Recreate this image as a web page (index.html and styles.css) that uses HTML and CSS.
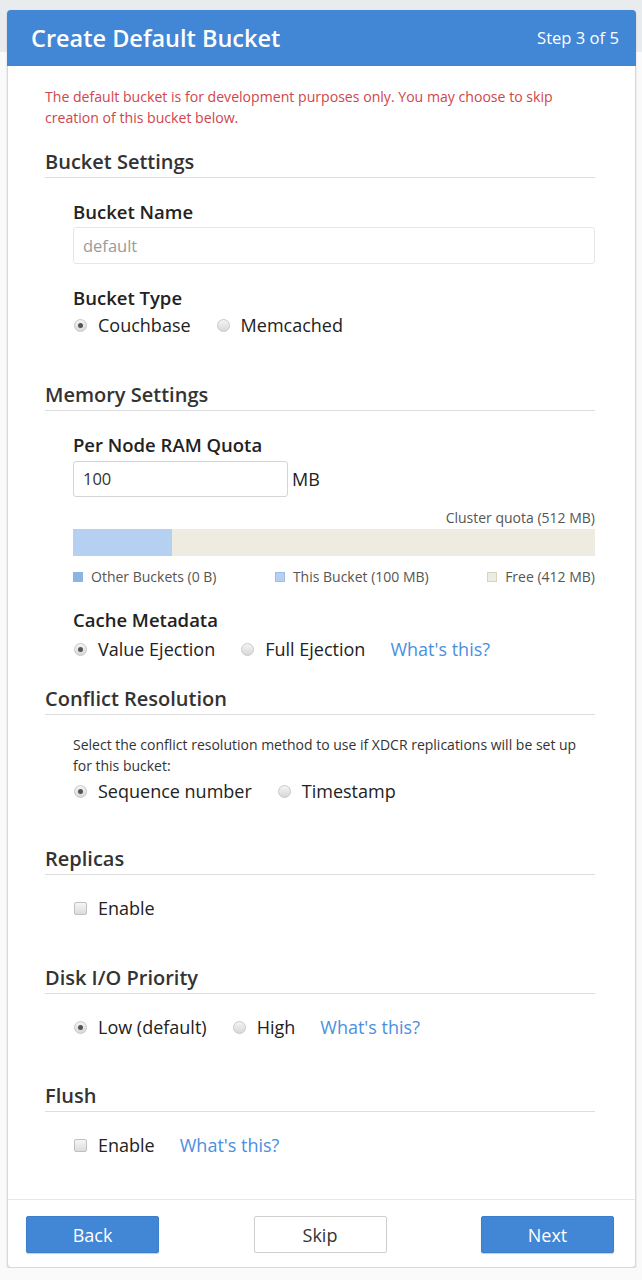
FILE: index.html
```html
<!DOCTYPE html>
<html>
<head>
<meta charset="utf-8">
<link rel="stylesheet" href="styles.css">
</head>
<body>
<div class="topband"></div>
<div class="card">
  <div class="card-header">
    <h1 class="title">Create Default Bucket</h1>
    <span class="step">Step 3 of 5</span>
  </div>
  <div class="card-body">
    <p class="warning">The default bucket is for development purposes only. You may choose to skip creation of this bucket below.</p>

    <h2 class="section-title s-first">Bucket Settings</h2>
    <div class="field">
      <label class="field-label">Bucket Name</label>
      <div class="text-input wide placeholder">default</div>
    </div>
    <div class="field">
      <label class="field-label">Bucket Type</label>
      <div class="options">
        <span class="opt"><span class="radio checked"></span>Couchbase</span>
        <span class="opt"><span class="radio"></span>Memcached</span>
      </div>
    </div>

    <h2 class="section-title s-mem">Memory Settings</h2>
    <div class="field">
      <label class="field-label l-quota">Per Node RAM Quota</label>
      <div class="quota-row">
        <div class="text-input short">100</div>
        <span class="unit">MB</span>
      </div>
      <div class="cluster-quota">Cluster quota (512 MB)</div>
      <div class="bar"><div class="bar-this" style="width:19%"></div></div>
      <div class="legend">
        <span class="legend-item"><span class="swatch sw-other"></span>Other Buckets (0 B)</span>
        <span class="legend-item"><span class="swatch sw-this"></span>This Bucket (100 MB)</span>
        <span class="legend-item"><span class="swatch sw-free"></span>Free (412 MB)</span>
      </div>
    </div>
    <div class="field">
      <label class="field-label">Cache Metadata</label>
      <div class="options opts-tight">
        <span class="opt"><span class="radio checked"></span>Value Ejection</span>
        <span class="opt"><span class="radio"></span>Full Ejection</span>
        <a class="link">What's this?</a>
      </div>
    </div>

    <h2 class="section-title s-near">Conflict Resolution</h2>
    <div class="field">
      <p class="help">Select the conflict resolution method to use if XDCR replications will be set up for this bucket:</p>
      <div class="options opts-help">
        <span class="opt"><span class="radio checked"></span>Sequence number</span>
        <span class="opt"><span class="radio"></span>Timestamp</span>
      </div>
    </div>

    <h2 class="section-title s-rep">Replicas</h2>
    <div class="field">
      <div class="options opts-solo">
        <span class="opt"><span class="checkbox"></span>Enable</span>
      </div>
    </div>

    <h2 class="section-title s-disk">Disk I/O Priority</h2>
    <div class="field">
      <div class="options opts-solo">
        <span class="opt"><span class="radio checked"></span>Low (default)</span>
        <span class="opt"><span class="radio"></span>High</span>
        <a class="link">What's this?</a>
      </div>
    </div>

    <h2 class="section-title s-wide">Flush</h2>
    <div class="field">
      <div class="options opts-solo">
        <span class="opt"><span class="checkbox"></span>Enable</span>
        <a class="link">What's this?</a>
      </div>
    </div>
  </div>
  <div class="card-footer">
    <button class="btn btn-primary">Back</button>
    <button class="btn btn-default">Skip</button>
    <button class="btn btn-primary">Next</button>
  </div>
</div>
</body>
</html>
```

FILE: styles.css
```css
* { box-sizing: border-box; }
html, body {
  margin: 0;
  padding: 0;
  background: #fafafa;
  font-family: "Open Sans", "Liberation Sans", sans-serif;
  color: #333;
}
body { position: relative; }
.topband {
  position: absolute;
  left: 0; top: 0; right: 0;
  height: 52px;
  background: #e9ecef;
  z-index: 0;
}
.card {
  position: relative;
  z-index: 1;
  margin: 10px 6px 0 7px;
  width: 629px;
  background: #fff;
  border: 1px solid #d9d9d9;
  border-radius: 4px;
  box-shadow: 0 1px 2px rgba(0,0,0,0.18);
}
.card-header {
  height: 56px;
  margin: -1px -1px 0 -1px;
  background: #4286d6;
  border-radius: 4px 4px 0 0;
  display: flex;
  align-items: center;
  justify-content: space-between;
  padding: 0 17px 0 24px;
  color: #fff;
}
.title {
  margin: 0;
  font-size: 23.5px;
  font-weight: 600;
  line-height: 30px;
}
.step {
  font-size: 16.6px;
  line-height: 22px;
}
.card-body {
  padding: 20px 40px 42px 37px;
}
.warning {
  margin: 0;
  color: #d0454c;
  font-size: 14.1px;
  line-height: 21px;
}
.section-title {
  margin: 44px 0 0 0;
  font-size: 20px;
  font-weight: 600;
  line-height: 24px;
  padding-bottom: 3px;
  border-bottom: 1px solid #dedede;
  color: #333;
}
.section-title.s-first { margin-top: 22px; }
.section-title.s-mem { margin-top: 46px; }
.section-title.s-wide { margin-top: 45px; }
.section-title.s-rep { margin-top: 44px; }
.section-title.s-disk { margin-top: 46px; }
.section-title.s-near { margin-top: 26px; }
.field {
  padding-left: 28px;
}
.field-label {
  display: block;
  margin-top: 22px;
  font-size: 18.5px;
  font-weight: 600;
  line-height: 24px;
  color: #222;
}
.field-label.l-quota { margin-top: 22px; }
.text-input {
  margin-top: 3px;
  height: 37px;
  border: 1px solid #e6e6e6;
  border-radius: 3px;
  padding: 0 9px;
  font-size: 16.5px;
  line-height: 35px;
  background: #fff;
  color: #333;
}
.text-input.placeholder { color: #9a9a9a; }
.text-input.short {
  width: 215px;
  height: 36px;
  line-height: 34px;
  border-color: #d4d4d4;
  margin-top: 0;
}
.quota-row {
  margin-top: 4px;
  display: flex;
  align-items: center;
  gap: 4px;
}
.unit {
  font-size: 18px;
  color: #222;
}
.cluster-quota {
  margin-top: 12px;
  text-align: right;
  font-size: 14px;
  line-height: 18px;
  color: #555;
}
.bar {
  margin-top: 2px;
  height: 27px;
  background: #eeebe1;
  display: flex;
}
.bar-this { background: #b5d0f0; }
.legend {
  margin-top: 12px;
  display: flex;
  justify-content: space-between;
  font-size: 14px;
  line-height: 18px;
  color: #555;
}
.legend-item { display: flex; align-items: center; }
.swatch {
  width: 10px;
  height: 10px;
  margin-right: 8px;
}
.sw-other { background: #8db3e2; }
.sw-this { background: #b5d0f0; border: 1px solid #9dbde6; }
.sw-free { background: #eeebe1; border: 1px solid #d6d2c6; }
.options {
  margin-top: 3px;
  display: flex;
  align-items: center;
  gap: 25px;
  font-size: 18px;
  line-height: 24px;
  color: #222;
}
.options.opts-tight { margin-top: 5px; }
.options.opts-help { margin-top: 3px; }
.options.opts-solo { margin-top: 21px; }
.opt { display: flex; align-items: center; }
.radio {
  width: 13px;
  height: 13px;
  border-radius: 50%;
  border: 1px solid #c8c8c8;
  background: linear-gradient(#f4f4f4, #d8d8d8);
  margin: 0 11px 0 1px;
  position: relative;
  flex: none;
}
.radio.checked::after {
  content: "";
  position: absolute;
  left: 3px; top: 3px;
  width: 5px; height: 5px;
  border-radius: 50%;
  background: #555;
}
.checkbox {
  width: 13px;
  height: 13px;
  border-radius: 2px;
  border: 1px solid #c0c0c0;
  background: linear-gradient(#f6f6f6, #dcdcdc);
  margin: 0 11px 0 1px;
  flex: none;
}
.link {
  color: #4a8fe0;
  text-decoration: none;
}
.help {
  margin: 19px 0 0 0;
  font-size: 14px;
  line-height: 21px;
  color: #333;
}
.card-footer {
  border-top: 1px solid #e8e8e8;
  padding: 16px 21px 14px 18px;
  display: flex;
  justify-content: space-between;
}
.btn {
  width: 133px;
  height: 37px;
  font-family: "Open Sans", "Liberation Sans", sans-serif;
  font-size: 18px;
  border-radius: 2px;
  cursor: pointer;
}
.btn-primary {
  background: #4286d6;
  border: 1px solid #3d7fcc;
  color: #fff;
  box-shadow: 0 1px 1px rgba(0,0,0,0.2);
}
.btn-default {
  background: #fff;
  border: 1px solid #cfcfcf;
  color: #333;
}
```
